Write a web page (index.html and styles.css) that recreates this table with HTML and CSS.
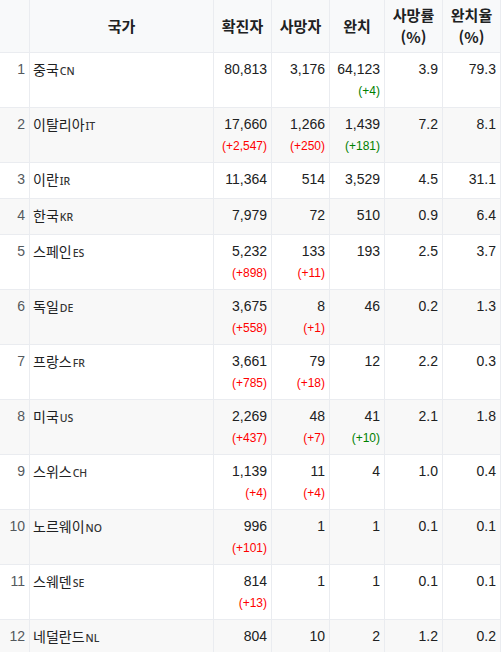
FILE: index.html
```html
<!DOCTYPE html>
<html lang="ko">
<head>
<meta charset="utf-8">
<title>국가별 현황</title>
<link rel="stylesheet" href="styles.css">
</head>
<body>
<table class="stats">
  <colgroup>
    <col class="c-rank"><col class="c-name"><col class="c-num"><col class="c-num"><col class="c-num2"><col class="c-num"><col class="c-num">
  </colgroup>
  <thead>
    <tr>
      <th></th>
      <th>국가</th>
      <th>확진자</th>
      <th>사망자</th>
      <th>완치</th>
      <th>사망률<br>(%)</th>
      <th>완치율<br>(%)</th>
    </tr>
  </thead>
  <tbody>
    <tr>
      <td class="rank">1</td><td class="name">중국<span class="code">CN</span></td>
      <td>80,813</td><td>3,176</td><td>64,123<div class="d good">(+4)</div></td><td>3.9</td><td>79.3</td>
    </tr>
    <tr>
      <td class="rank">2</td><td class="name">이탈리아<span class="code">IT</span></td>
      <td>17,660<div class="d bad">(+2,547)</div></td><td>1,266<div class="d bad">(+250)</div></td><td>1,439<div class="d good">(+181)</div></td><td>7.2</td><td>8.1</td>
    </tr>
    <tr>
      <td class="rank">3</td><td class="name">이란<span class="code">IR</span></td>
      <td>11,364</td><td>514</td><td>3,529</td><td>4.5</td><td>31.1</td>
    </tr>
    <tr>
      <td class="rank">4</td><td class="name">한국<span class="code">KR</span></td>
      <td>7,979</td><td>72</td><td>510</td><td>0.9</td><td>6.4</td>
    </tr>
    <tr>
      <td class="rank">5</td><td class="name">스페인<span class="code">ES</span></td>
      <td>5,232<div class="d bad">(+898)</div></td><td>133<div class="d bad">(+11)</div></td><td>193</td><td>2.5</td><td>3.7</td>
    </tr>
    <tr>
      <td class="rank">6</td><td class="name">독일<span class="code">DE</span></td>
      <td>3,675<div class="d bad">(+558)</div></td><td>8<div class="d bad">(+1)</div></td><td>46</td><td>0.2</td><td>1.3</td>
    </tr>
    <tr>
      <td class="rank">7</td><td class="name">프랑스<span class="code">FR</span></td>
      <td>3,661<div class="d bad">(+785)</div></td><td>79<div class="d bad">(+18)</div></td><td>12</td><td>2.2</td><td>0.3</td>
    </tr>
    <tr>
      <td class="rank">8</td><td class="name">미국<span class="code">US</span></td>
      <td>2,269<div class="d bad">(+437)</div></td><td>48<div class="d bad">(+7)</div></td><td>41<div class="d good">(+10)</div></td><td>2.1</td><td>1.8</td>
    </tr>
    <tr>
      <td class="rank">9</td><td class="name">스위스<span class="code">CH</span></td>
      <td>1,139<div class="d bad">(+4)</div></td><td>11<div class="d bad">(+4)</div></td><td>4</td><td>1.0</td><td>0.4</td>
    </tr>
    <tr>
      <td class="rank">10</td><td class="name">노르웨이<span class="code">NO</span></td>
      <td>996<div class="d bad">(+101)</div></td><td>1</td><td>1</td><td>0.1</td><td>0.1</td>
    </tr>
    <tr>
      <td class="rank">11</td><td class="name">스웨덴<span class="code">SE</span></td>
      <td>814<div class="d bad">(+13)</div></td><td>1</td><td>1</td><td>0.1</td><td>0.1</td>
    </tr>
    <tr>
      <td class="rank">12</td><td class="name">네덜란드<span class="code">NL</span></td>
      <td>804</td><td>10</td><td>2</td><td>1.2</td><td>0.2</td>
    </tr>
    <tr class="total">
      <td></td><td></td><td></td><td></td><td></td><td></td><td></td>
    </tr>
  </tbody>
</table>
</body>
</html>
```

FILE: styles.css
```css
html, body {
  margin: 0;
  padding: 0;
  background: #ffffff;
}

body {
  font-family: "Liberation Sans", Arial, "Noto Sans CJK KR", sans-serif;
  font-size: 14px;
  color: #202122;
  overflow: hidden;
}

.stats {
  border-collapse: collapse;
  table-layout: fixed;
  width: 502px;
  margin: -1px 0 0 -1px;
}

.c-rank { width: 30px; }
.c-name { width: 184px; }
.c-num { width: 58px; }
.c-num2 { width: 55px; }

.stats th,
.stats td {
  border: 1px solid #eaecf0;
}

.stats th {
  background: #f8f9fa;
  font-family: "Noto Sans CJK KR", "Liberation Sans", sans-serif;
  font-weight: 700;
  font-size: 15px;
  line-height: 22px;
  padding: 4px 1px;
  text-align: center;
  vertical-align: middle;
  color: #202122;
}

.stats td {
  padding: 5px 4px 5px 3px;
  line-height: 23px;
  text-align: right;
  vertical-align: top;
  white-space: nowrap;
}

.stats tbody tr:nth-child(even) td {
  background: #f8f8f8;
}

.stats td.rank {
  color: #54595d;
  padding-right: 4px;
}

.stats td.name {
  text-align: left;
  padding-left: 3px;
  font-family: "Noto Sans CJK KR", sans-serif;
}

.code {
  font-family: "Noto Sans", "Liberation Sans", sans-serif;
  font-size: 10.5px;
  font-weight: 500;
  color: #333333;
  margin-left: 1px;
}

.d {
  font-size: 12px;
  line-height: 21px;
}

.d.bad { color: #ff0000; }
.d.good { color: #008000; }

.stats tbody tr.total td {
  background: #eaf3ff;
  height: 1px;
  padding: 0;
  line-height: 1px;
}
```
